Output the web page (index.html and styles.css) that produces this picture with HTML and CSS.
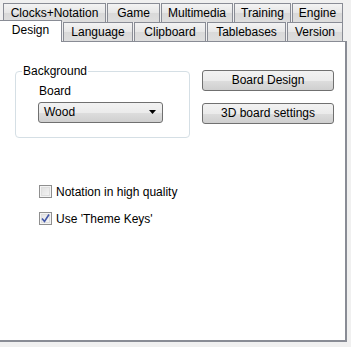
FILE: index.html
```html
<!DOCTYPE html>
<html>
<head>
<meta charset="utf-8">
<link rel="stylesheet" href="styles.css">
</head>
<body>
<div class="dialog">
  <div class="tabrow top">
    <div class="tab w-clocks">Clocks+Notation</div>
    <div class="tab w-game">Game</div>
    <div class="tab w-multi">Multimedia</div>
    <div class="tab w-training">Training</div>
    <div class="tab w-engine">Engine</div>
  </div>
  <div class="tabrow bottom">
    <div class="tab selected w-design">Design</div>
    <div class="tab w-language">Language</div>
    <div class="tab w-clip">Clipboard</div>
    <div class="tab w-table">Tablebases</div>
    <div class="tab w-version">Version</div>
  </div>
  <div class="panel">
    <div class="upper">
      <fieldset class="group">
        <legend>Background</legend>
        <div class="label">Board</div>
        <div class="select">
          <span>Wood</span>
          <svg class="arrow" width="7" height="4" viewBox="0 0 7 4"><path d="M0 0H7L3.5 4Z" fill="#000"/></svg>
        </div>
      </fieldset>
      <div class="buttons">
        <div class="button">Board Design</div>
        <div class="button">3D board settings</div>
      </div>
    </div>
    <div class="checks">
      <div class="check">
        <span class="box"></span>
        <span>Notation in high quality</span>
      </div>
      <div class="check">
        <span class="box checked">
          <svg width="11" height="11" viewBox="0 0 11 11"><path d="M2 5.5L4.5 8.5L9 1.5" fill="none" stroke="#4257a8" stroke-width="1.6"/></svg>
        </span>
        <span>Use 'Theme Keys'</span>
      </div>
    </div>
  </div>
</div>
</body>
</html>
```
FILE: styles.css
```css
html, body {
  margin: 0;
  padding: 0;
  background: #f0f0f0;
}
body {
  font-family: "Liberation Sans", Arial, sans-serif;
  font-size: 12px;
  color: #000;
  width: 351px;
  height: 347px;
  overflow: hidden;
}
.dialog {
  padding-top: 3px;
}
.tabrow {
  display: flex;
  height: 19px;
}
.tabrow.top {
  padding-left: 3px;
}
.tab {
  box-sizing: border-box;
  height: 19px;
  border: 1px solid #898c95;
  border-bottom: none;
  background: linear-gradient(#f3f3f3, #e6e6e6 50%, #d9d9d9 51%, #dedede);
  display: flex;
  align-items: center;
  justify-content: center;
  line-height: 14px;
  margin-right: 1px;
  padding-bottom: 1px;
}
.tab.selected {
  position: relative;
  z-index: 2;
  background: #fff;
  height: 22px;
  margin-top: -2px;
  margin-bottom: -1px;
  border-left: none;
  padding-bottom: 3px;
}
.w-clocks { width: 103px; }
.w-game { width: 53px; }
.w-multi { width: 72px; }
.w-training { width: 57px; }
.w-engine { width: 51px; margin-right: 0; }
.w-design { width: 62px; }
.w-language { width: 70px; }
.w-clip { width: 72px; }
.w-table { width: 79px; }
.w-version { width: 56px; margin-right: 0; }

.panel {
  box-sizing: border-box;
  margin-left: -2px;
  width: 349px;
  height: 301px;
  background: #fff;
  border: 1px solid #898c95;
  border-right-width: 2px;
  border-bottom-width: 2px;
  padding: 23px 0 0 16px;
}
.upper {
  display: flex;
  align-items: flex-start;
}
.group {
  box-sizing: border-box;
  margin: 0;
  width: 175px;
  height: 73px;
  border: 1px solid #d5dfe5;
  border-radius: 4px;
  padding: 0 0 0 23px;
}
.group legend {
  padding: 0 1px;
  margin-left: -17px;
  line-height: 13px;
}
.label {
  line-height: 13px;
  margin-top: 7px;
}
.select {
  box-sizing: border-box;
  margin-top: 4px;
  margin-left: -1px;
  width: 125px;
  height: 21px;
  border: 1px solid #707070;
  border-radius: 3px;
  background: linear-gradient(#f2f2f2, #ebebeb 50%, #dddddd 51%, #cfcfcf);
  display: flex;
  align-items: center;
  justify-content: space-between;
  padding: 0 6px 1px 5px;
}
.arrow {
  display: block;
}
.buttons {
  display: flex;
  flex-direction: column;
  gap: 12px;
  margin-left: 12px;
  margin-top: 5px;
}
.button {
  box-sizing: border-box;
  width: 132px;
  height: 21px;
  border: 1px solid #707070;
  border-radius: 3px;
  background: linear-gradient(#f2f2f2, #ebebeb 50%, #dddddd 51%, #cfcfcf);
  display: flex;
  align-items: center;
  justify-content: center;
  padding-bottom: 1px;
}
.checks {
  display: flex;
  flex-direction: column;
  gap: 14px;
  margin-top: 47px;
  margin-left: 24px;
}
.check {
  display: flex;
  align-items: center;
  gap: 4px;
  height: 13px;
}
.box {
  box-sizing: border-box;
  width: 13px;
  height: 13px;
  border: 1px solid #8f8f8f;
  background: linear-gradient(135deg, #dcdcdc, #f8f8f8);
  box-shadow: inset 0 0 0 1px #f4f4f4, inset 0 0 0 2px #dedede;
  display: flex;
  align-items: center;
  justify-content: center;
}
.box.checked {
  background: linear-gradient(135deg, #e0e0e0, #fafafa);
}
.box svg {
  display: block;
}
```
